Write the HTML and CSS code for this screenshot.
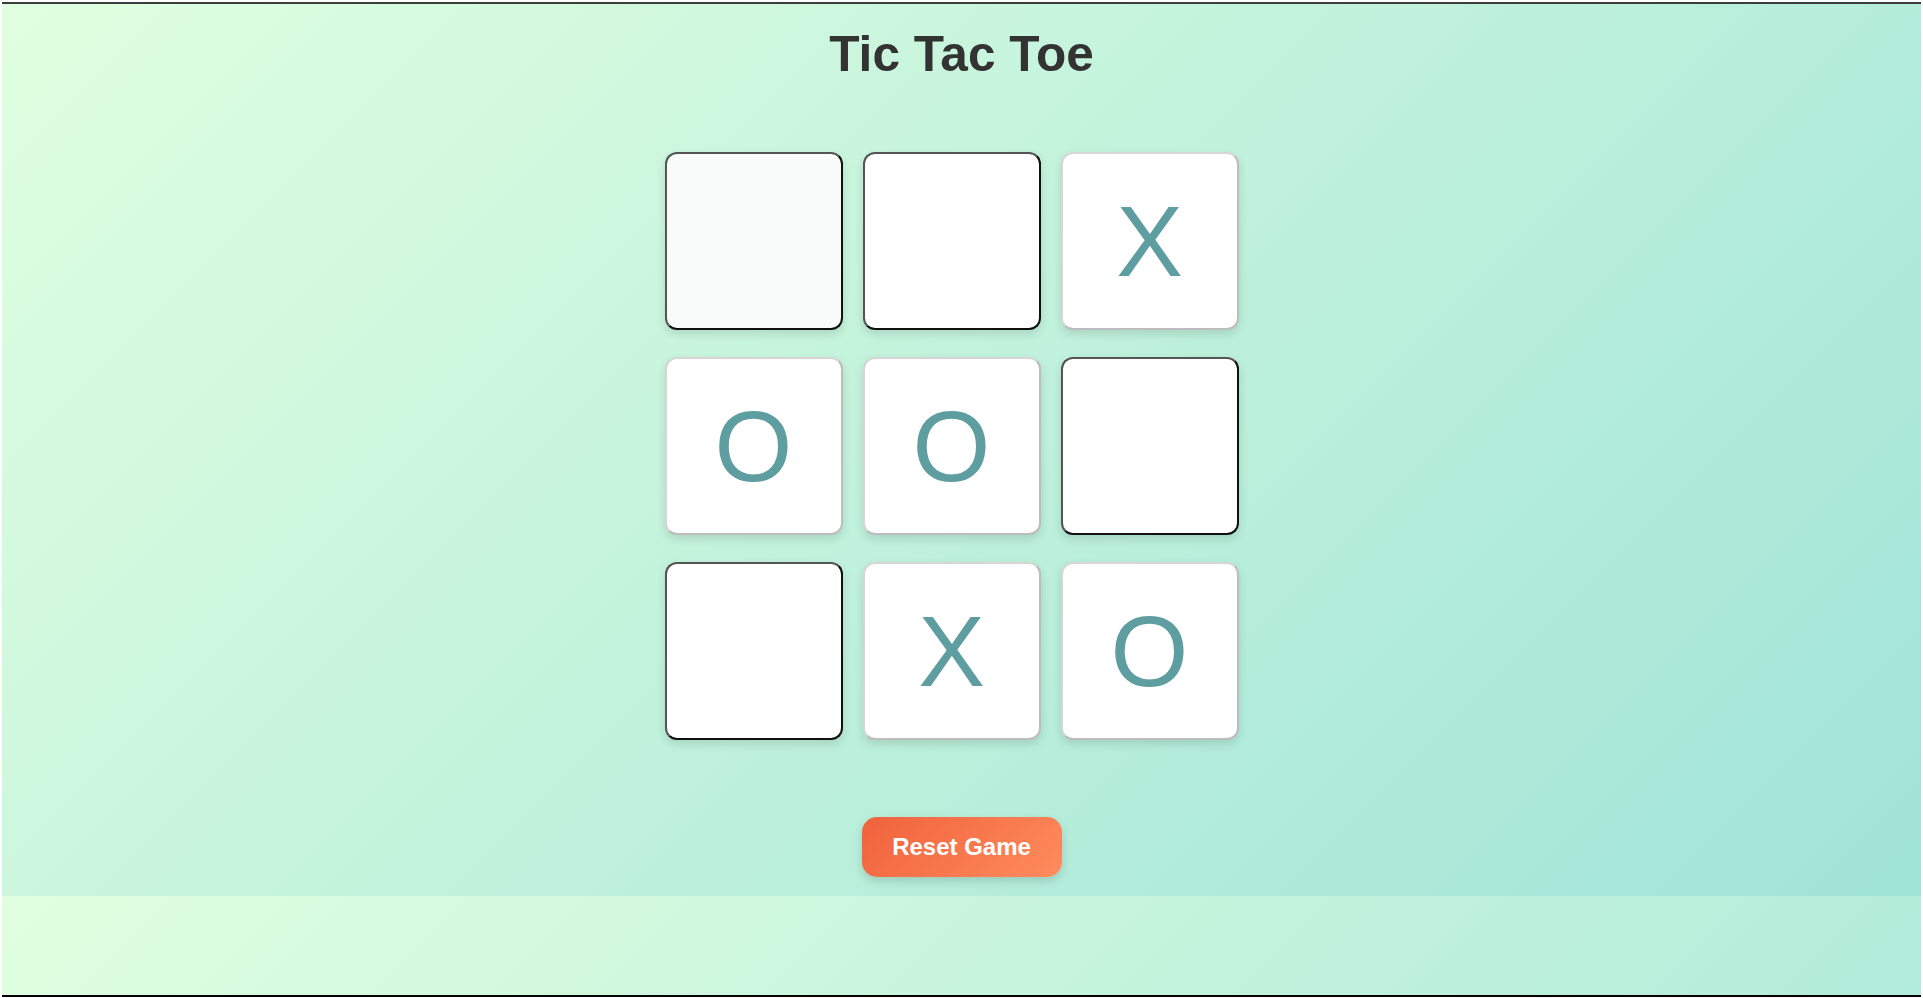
FILE: index.html
```html
<!DOCTYPE html>
<html lang="en">
<head>
<meta charset="utf-8">
<title>Tic Tac Toe</title>
<link rel="stylesheet" href="styles.css">
</head>
<body>
<main class="game">
  <h1 class="title">Tic Tac Toe</h1>
  <div class="board">
    <button class="cell cell--hover"></button>
    <button class="cell"></button>
    <button class="cell cell--filled">X</button>
    <button class="cell cell--filled">O</button>
    <button class="cell cell--filled">O</button>
    <button class="cell"></button>
    <button class="cell"></button>
    <button class="cell cell--filled">X</button>
    <button class="cell cell--filled">O</button>
  </div>
  <button class="reset">Reset Game</button>
</main>
</body>
</html>
```
FILE: styles.css
```css
html {
  height: 100%;
  background: #ffffff;
}

body {
  box-sizing: border-box;
  margin: 2px 2px 1px;
  min-height: calc(100% - 3px);
  border-top: 2px solid #3d3d3d;
  border-bottom: 2px solid #000000;
  background-image: linear-gradient(135deg, #e0ffe0 0%, #a0e4d8 100%);
  background-size: 100% 892px;
  background-repeat: repeat-y;
  font-family: "Liberation Sans", Arial, sans-serif;
}

.game {
  display: flex;
  flex-direction: column;
  align-items: center;
}

.title {
  margin: 21px 0 69px;
  font-size: 49.6px;
  font-weight: bold;
  color: #333333;
  text-align: center;
}

.board {
  display: grid;
  grid-template-columns: repeat(3, 178px);
  grid-auto-rows: 178px;
  column-gap: 20px;
  row-gap: 27px;
  padding-right: 20px;
}

.cell {
  box-sizing: border-box;
  width: 178px;
  height: 178px;
  padding: 0;
  border: 2px solid;
  border-color: #555555 #111111 #111111 #555555;
  border-radius: 12px;
  background: #ffffff;
  box-shadow: 0 4px 10px rgba(0, 0, 0, 0.12);
  font-family: "Liberation Sans", Arial, sans-serif;
  font-size: 100px;
  font-weight: normal;
  line-height: normal;
  color: #5f9ea0;
  cursor: pointer;
}

.cell--hover {
  background: #f9fbfa;
}

.cell--filled {
  border-color: #d6d6d6 #bdbdbd #bdbdbd #d6d6d6;
  cursor: default;
}

.reset {
  width: 200px;
  height: 60px;
  margin-top: 77px;
  margin-bottom: 20px;
  padding: 0;
  border: none;
  border-radius: 15px;
  background: linear-gradient(135deg, #f0623c 0%, #ff8c5e 100%);
  box-shadow: 0 4px 10px rgba(0, 0, 0, 0.15);
  font-family: "Liberation Sans", Arial, sans-serif;
  font-size: 24px;
  font-weight: bold;
  color: #ffffff;
  cursor: pointer;
}
```
